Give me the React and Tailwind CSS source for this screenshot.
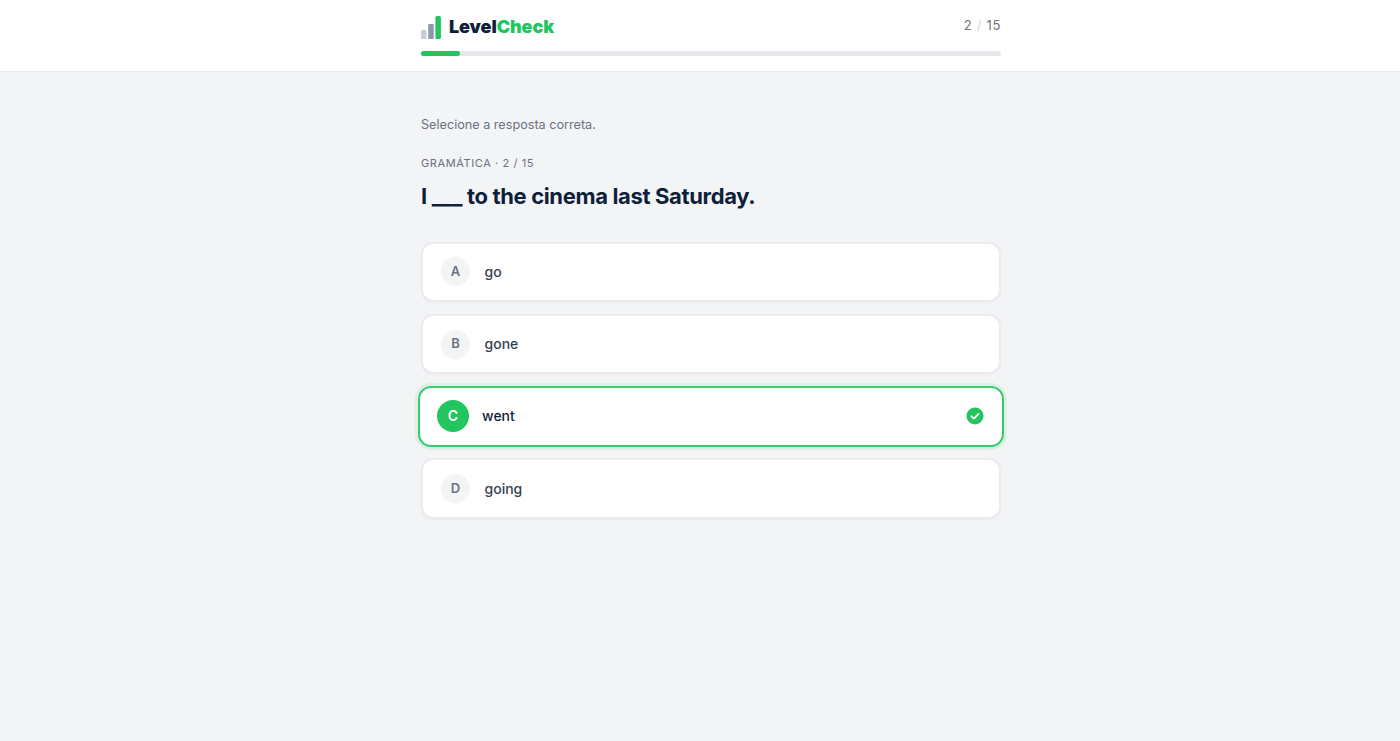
import React from "react";

const options = [
  { letter: "A", text: "go" },
  { letter: "B", text: "gone" },
  { letter: "C", text: "went", selected: true },
  { letter: "D", text: "going" },
];

function Logo() {
  return (
    <div className="flex items-center">
      <svg width="20" height="24" viewBox="0 0 20 24" className="mt-[1px] block">
        <rect x="0" y="14" width="5.5" height="9" rx="1" fill="#c9ced6" />
        <rect x="7.2" y="8" width="5.5" height="15" rx="1" fill="#8e99a8" />
        <rect x="14.4" y="0" width="5.5" height="23" rx="1.5" fill="#22c55e" />
      </svg>
      <span className="ml-2 text-[18px] leading-6 font-black tracking-[-0.1px] text-[#0f1f3a]">
        Level<span className="text-[#22c55e]">Check</span>
      </span>
    </div>
  );
}

function OptionCard({ letter, text, selected }) {
  if (selected) {
    return (
      <div className="-mx-[3px] -my-[0.25px] flex h-[61px] items-center rounded-[13px] border-2 border-[#34cc6c] bg-white pl-[16px] pr-[17px] shadow-[0_0_0_3px_rgba(34,197,94,0.1)]">
        <div className="ml-[1px] flex h-8 w-8 items-center justify-center rounded-full bg-[#22c55e] text-sm font-semibold text-white">
          {letter}
        </div>
        <span className="ml-[13px] text-sm font-[450] text-[#0f1f3a]">{text}</span>
        <svg width="18" height="18" viewBox="0 0 18 18" className="mr-[1px] ml-auto">
          <circle cx="9" cy="9" r="8.5" fill="#22c55e" />
          <path d="M5.4 9.3l2.5 2.4 4.7-4.8" fill="none" stroke="#fff" strokeWidth="1.8" strokeLinecap="round" strokeLinejoin="round" />
        </svg>
      </div>
    );
  }
  return (
    <div className="flex h-[60.5px] items-center rounded-xl border-2 border-[#e9ebee] bg-white pl-[18px] pr-4 shadow-[0_1px_2px_rgba(0,0,0,0.03)]">
      <div className="flex h-[29px] w-[29px] items-center justify-center rounded-full bg-[#f3f4f6] text-[13px] font-semibold text-[#6b7280]">
        {letter}
      </div>
      <span className="ml-[14.5px] text-sm font-[450] text-[#374151]">{text}</span>
    </div>
  );
}

export default function App() {
  return (
    <div className="min-h-[741px] bg-[#f3f4f6] font-['Inter',sans-serif]">
      <header className="h-[72px] border-b border-[#e5e7eb] bg-white pl-[22px]">
        <div className="mx-auto w-[580px] pt-[15px]">
          <div className="flex h-6 items-center justify-between">
            <Logo />
            <div className="-mt-[3px] text-[13px] tracking-[0.7px] text-[#6b7280]">
              2 <span className="text-[#d1d5db]">/</span> 15
            </div>
          </div>
          <div className="mt-3 h-[5px] w-full rounded-full bg-[#e5e7eb]">
            <div className="h-full w-[39px] rounded-full bg-[#22c55e]" />
          </div>
        </div>
      </header>

      <main className="pl-[22px]">
        <div className="mx-auto w-[580px] pt-[45px]">
          <p className="text-[12.65px] leading-4 text-[#6b7280]">Selecione a resposta correta.</p>
          <p className="mt-[22px] text-[11px] leading-4 tracking-[0.6px] text-[#6b7280]">GRAMÁTICA · 2 / 15</p>
          <h1 className="mt-[8px] text-[22px] leading-[34px] font-bold tracking-[-0.35px] text-[#0f1f3a]">
            I ___ to the cinema last Saturday.
          </h1>
          <div className="mt-[28.5px] flex flex-col gap-[11.75px]">
            {options.map((opt) => (
              <OptionCard key={opt.letter} {...opt} />
            ))}
          </div>
        </div>
      </main>
    </div>
  );
}
